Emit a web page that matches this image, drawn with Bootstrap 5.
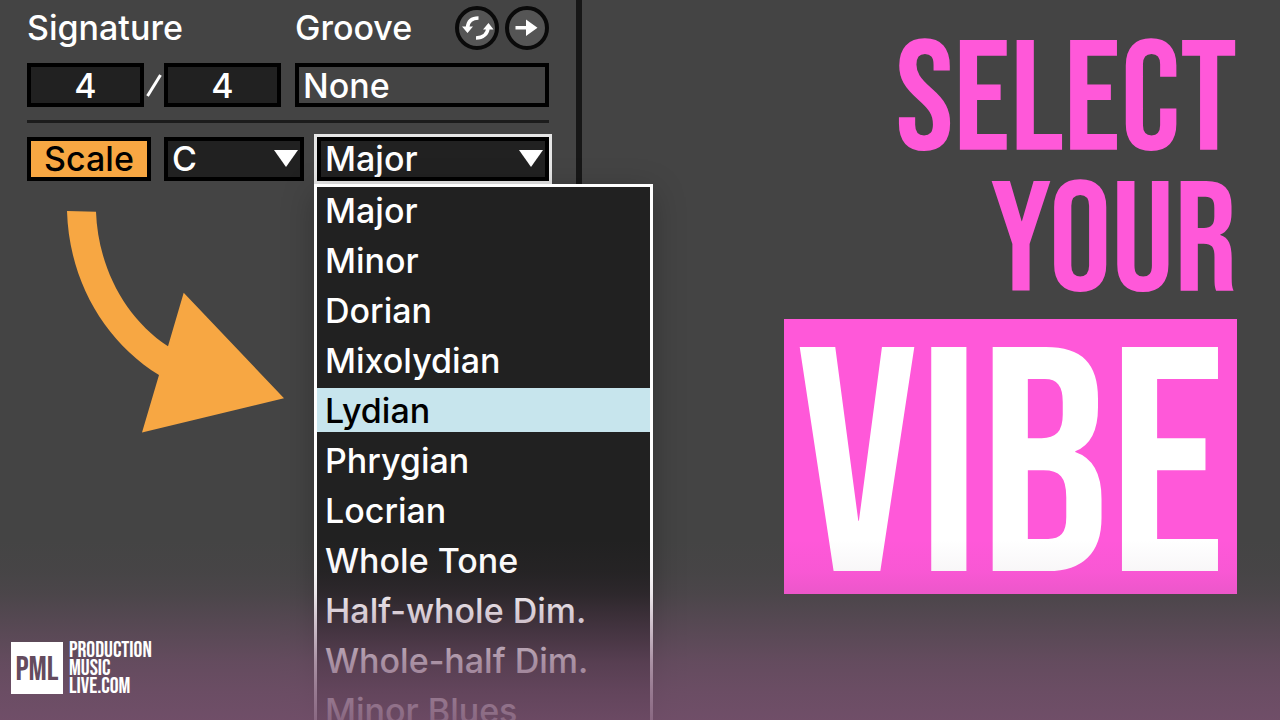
<!DOCTYPE html>
<html lang="en">
<head>
<meta charset="utf-8">
<meta name="viewport" content="width=device-width, initial-scale=1">
<title>Select your vibe</title>
<link href="https://cdn.jsdelivr.net/npm/bootstrap@5.3.0/dist/css/bootstrap.min.css" rel="stylesheet">
<style>
  :root { --ink: #212121; --pink: #ff58d9; --amber: #f7a743; }
  body { background: #444; color: #fff; font-family: Inter, "Liberation Sans", sans-serif; }
  .stage { font-size: 34px; font-weight: 500; line-height: 44px; }

  /* transport panel */
  .panel { width: 582px; padding: 6px 27px 0; border-right: 6px solid #171717; }
  .groove-label { width: 160px; }
  .groove-tools { gap: 6px; }
  .round-btn { width: 44px; height: 44px; border: 4px solid #0a0a0a; background: #555; }
  .field { height: 44px; border: 4px solid #000; background: var(--ink); color: #fff; font: inherit; line-height: 36px; border-radius: 0; outline: 0; }
  .sig-row { margin-top: 13px; }
  .beat { width: 117px; }
  .slash { width: 20px; }
  .groove-field { width: 0; margin-left: 14px; background: #444; padding: 0 4px; }
  .rule { border-top: 3px solid #1c1c1c; margin: 13px 0 14px; }
  .scale-row { gap: 13px; }
  .scale-btn { width: 124px; background: var(--amber); color: #000; }
  .key-box { width: 140px; }
  .pick { appearance: none; padding: 0 4px; }
  .caret { right: 6px; top: 13px; pointer-events: none; }
  .is-open { outline: 3px solid #e6e6e6; }
  .scale-menu { top: 47px; left: -3px; width: 339px; padding: 1px 0; border: 3px solid #fff; background: var(--ink); z-index: 2; box-shadow: 0 8px 30px rgba(0,0,0,.25); }
  .scale-menu li + li { margin-top: 6px; }
  .scale-item { height: 44px; padding: 0 8px; border: 0; background: none; color: #fff; font: inherit; line-height: 46px; text-align: left; white-space: nowrap; }
  .scale-item.chosen { background: #c7e5ed; color: #000; }
  .pointer { margin: 30px 0 0 40px; }

  /* headline */
  .headline { padding: 32px 43px 0 0; font-family: "Bebas Neue", Oswald, "Roboto Condensed", sans-serif; font-weight: 400; }
  .line-top { font-size: 156px; line-height: 141px; color: var(--pink); }
  .line-box { margin-top: 5px; height: 275px; padding: 0 12px; font-size: 320px; line-height: 312px; background: var(--pink); color: #fff; }

  /* tinted fade and brand */
  .fade-foot { height: 180px; padding: 0 11px 26px; z-index: 3; pointer-events: none;
    background: linear-gradient(rgba(119,80,110,0), rgba(119,80,110,.05) 18%, rgba(119,80,110,.14) 30%, rgba(119,80,110,.29) 41%, rgba(119,80,110,.48) 56%, rgba(119,80,110,.63) 68%, rgba(119,80,110,.76) 84%, rgba(119,80,110,.86)); }
  .brand { gap: 6px; font-family: "Bebas Neue", Oswald, sans-serif; font-weight: 400; font-size: 22px; line-height: 18px; }
  .brand-mark { width: 52px; height: 52px; background: #fff; color: #644b5e; font-size: 34px; line-height: 56px; }
  .brand-name { height: 52px; }
</style>
</head>
<body>
<main class="stage position-relative d-flex vh-100 overflow-hidden">
  <section class="panel flex-shrink-0">
    <div class="d-flex align-items-center">
      <label for="beats">Signature</label>
      <label for="groove" class="groove-label ms-auto">Groove</label>
      <div class="groove-tools d-flex">
        <button class="round-btn rounded-circle p-0 d-flex" type="button" aria-label="Swap groove">
          <svg width="36" height="36" viewBox="0 0 36 36" fill="none" stroke="#fff" stroke-width="3.5"><path d="M19.500 8C13 8 9 11.500 8.500 17.500"/><path d="M17 28C24 28 28.500 24 29 18"/><path d="M3 16.500h11l-5.500 6.500zM24 19.500h10.500L29.500 13z" fill="#fff" stroke="none"/></svg>
        </button>
        <button class="round-btn rounded-circle p-0 d-flex" type="button" aria-label="Commit groove">
          <svg width="36" height="36" viewBox="0 0 36 36" fill="#fff"><path d="M6.500 16H17V9.500L28.500 17.800 17 26V19.500H6.500z"/></svg>
        </button>
      </div>
    </div>
    <div class="sig-row d-flex">
      <input id="beats" class="field beat flex-shrink-0 text-center p-0" value="4">
      <span class="slash flex-shrink-0 d-flex align-items-center justify-content-center"><svg width="16" height="26" viewBox="0 0 16 26"><path d="M1.500 24L14.500 3" stroke="#fff" stroke-width="3"/></svg></span>
      <input class="field beat flex-shrink-0 text-center p-0" value="4" aria-label="Beat unit">
      <input id="groove" class="field groove-field flex-grow-1" value="None">
    </div>
    <div class="rule"></div>
    <div class="scale-row d-flex">
      <button class="field scale-btn p-0" type="button">Scale</button>
      <div class="key-box position-relative">
        <select class="field pick w-100 d-block" aria-label="Root note"><option>C</option></select>
        <svg class="caret position-absolute" width="24" height="18" viewBox="0 0 24 18"><path d="M0 0h24L12 17z" fill="#fff"/></svg>
      </div>
      <div class="position-relative flex-grow-1">
        <select class="field pick is-open w-100 d-block" aria-label="Scale name"><option>Major</option></select>
        <svg class="caret position-absolute" width="24" height="18" viewBox="0 0 24 18"><path d="M0 0h24L12 17z" fill="#fff"/></svg>
        <ul class="scale-menu position-absolute list-unstyled mb-0">
          <li><button class="scale-item w-100 d-block" type="button">Major</button></li>
          <li><button class="scale-item w-100 d-block" type="button">Minor</button></li>
          <li><button class="scale-item w-100 d-block" type="button">Dorian</button></li>
          <li><button class="scale-item w-100 d-block" type="button">Mixolydian</button></li>
          <li><button class="scale-item chosen w-100 d-block" type="button">Lydian</button></li>
          <li><button class="scale-item w-100 d-block" type="button">Phrygian</button></li>
          <li><button class="scale-item w-100 d-block" type="button">Locrian</button></li>
          <li><button class="scale-item w-100 d-block" type="button">Whole Tone</button></li>
          <li><button class="scale-item w-100 d-block" type="button">Half-whole Dim.</button></li>
          <li><button class="scale-item w-100 d-block" type="button">Whole-half Dim.</button></li>
          <li><button class="scale-item w-100 d-block" type="button">Minor Blues</button></li>
        </ul>
      </div>
    </div>
    <svg class="pointer d-block" width="217" height="222" viewBox="0 0 217 222" aria-hidden="true"><path d="M0 0L29 .7C31 56 58 107 101 135.300L116.700 81.700L217 187.300L75 221.500L92 164C38 131 2 70 0 0z" fill="#f7a743"/></svg>
  </section>
  <h1 class="headline flex-grow-1 mb-0 d-flex flex-column align-items-end">
    <span class="line-top">SELECT</span>
    <span class="line-top">YOUR</span>
    <span class="line-box">VIBE</span>
  </h1>
  <footer class="fade-foot position-absolute bottom-0 start-0 w-100 d-flex align-items-end">
    <div class="brand d-flex">
      <div class="brand-mark text-center">PML</div>
      <div class="brand-name">PRODUCTION<br>MUSIC<br>LIVE.COM</div>
    </div>
  </footer>
</main>
<script src="https://cdn.jsdelivr.net/npm/bootstrap@5.3.0/dist/js/bootstrap.bundle.min.js"></script>
</body>
</html>
